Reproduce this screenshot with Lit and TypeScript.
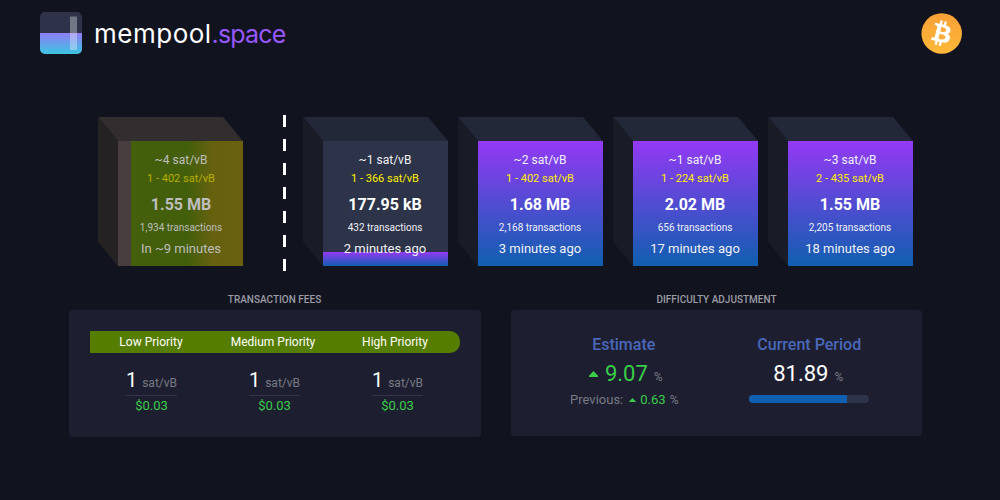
import { LitElement, html, css } from "lit";
import { customElement } from "lit/decorators.js";
import { styleMap } from "lit/directives/style-map.js";

interface Block {
  fee: string;
  range: string;
  size: string;
  count: string;
  time: string;
  fill: number;
}

const BLOCKS: Block[] = [
  { fee: "~1 sat/vB", range: "1 - 366 sat/vB", size: "177.95 kB", count: "432 transactions", time: "2 minutes ago", fill: 11.2 },
  { fee: "~2 sat/vB", range: "1 - 402 sat/vB", size: "1.68 MB", count: "2,168 transactions", time: "3 minutes ago", fill: 100 },
  { fee: "~1 sat/vB", range: "1 - 224 sat/vB", size: "2.02 MB", count: "656 transactions", time: "17 minutes ago", fill: 100 },
  { fee: "~3 sat/vB", range: "2 - 435 sat/vB", size: "1.55 MB", count: "2,205 transactions", time: "18 minutes ago", fill: 100 },
];

const PENDING: Block = { fee: "~4 sat/vB", range: "1 - 402 sat/vB", size: "1.55 MB", count: "1,934 transactions", time: "In ~9 minutes", fill: 0 };

@customElement("app-root")
export class AppRoot extends LitElement {
  static styles = css`
    :host { display: block; width: 1000px; height: 500px; overflow: hidden; background: #11131f; color: #fff; font-family: Roboto, sans-serif; }
    * { box-sizing: border-box; }
    svg { display: block; }
    .header { display: flex; align-items: center; height: 54px; padding: 12px 38px 0 40px; }
    .brand { margin-left: 12px; padding-top: 2px; font: 400 26px/42px Inter, sans-serif; letter-spacing: 0.5px; flex: 1; white-space: nowrap; }
    .brand span { color: #9857ff; font-size: 25px; letter-spacing: -0.85px; }
    .chain { display: flex; padding: 63px 0 0 98px; height: 218px; }
    .cube { display: grid; grid-template: 24px 125px / 20px 125px; margin-right: 10px; flex: none; }
    .shade { grid-area: 1 / 1 / 3 / 3; }
    .face { grid-area: 2 / 2; text-align: center; padding: 10px 1px 0 0; white-space: nowrap; }
    .pending .face { padding: 10px 0 0 1px; }
    .fee { font-size: 12px; line-height: 18px; }
    .range { font-size: 11px; line-height: 18px; margin-top: 1px; color: #fff000; }
    .size { font-size: 16px; line-height: 24px; font-weight: 700; margin-top: 5px; }
    .count { font-size: 10px; line-height: 16px; margin-top: 3px; }
    .time { font-size: 13px; line-height: 20px; margin-top: 3px; }
    .fee, .count, .time { color: #f0f0f6; }
    .pending .fee, .pending .size, .pending .count, .pending .time { color: #bebebe; }
    .pending .range { color: #b8ae00; }
    .divider { width: 3px; height: 156px; margin: -2px 17px 0 30px; flex: none; background: repeating-linear-gradient(#fff 0 12px, transparent 12px 24px); }
    .panels { display: flex; gap: 30px; padding: 20px 0 0 69px; }
    .panel { width: 412px; }
    .panel.narrow { width: 411px; }
    .title { height: 18px; padding-right: 1px; text-align: center; font-size: 10px; line-height: 15px; font-weight: 500; color: #9b9ca4; }
    .narrow .title { padding-right: 0; }
    .card { height: 127px; background: #1d1f31; border-radius: 4px; padding: 21px; }
    .narrow .card { height: 126px; display: grid; grid-template-columns: 1fr 1fr; padding: 24px 20px 20px; text-align: center; white-space: nowrap; }
    .bar { display: grid; grid-template-columns: 122px 122px 122px; height: 22px; background: #557d00; border-radius: 0 10px 10px 0; text-align: center; font-size: 12px; line-height: 22px; }
    .fees { display: grid; grid-template-columns: 123px 123px 123px; justify-items: center; padding-top: 14px; }
    .rate { height: 29px; border-bottom: 1px solid #353748; font-size: 20px; line-height: 27px; white-space: nowrap; }
    .rate span { font-size: 12px; color: #777983; }
    .price { text-align: center; font-size: 13px; line-height: 19px; color: #3bcc49; }
    .label { font-size: 16px; line-height: 22px; font-weight: 500; color: #4a68b9; }
    .value { font-size: 22px; line-height: 36px; height: 35px; display: flex; justify-content: center; align-items: baseline; padding-right: 2px; }
    .value.green { padding: 0 0 0 4px; }
    .unit { font-size: 12px; color: #777983; margin-left: 6px; }
    .green { color: #3bcc49; }
    .arrow { width: 9px; height: 6px; margin: 1px 7px 0 0; align-self: center; }
    .previous { display: flex; justify-content: center; align-items: center; padding-left: 1px; font-size: 13px; line-height: 18px; color: #777983; }
    .small { width: 7px; height: 4px; margin: 0 4px 0 6px; }
    .previous .unit { margin-left: 4px; }
    .progress { width: 120px; height: 8px; margin: 4px auto 0; border-radius: 4px; overflow: hidden; background: #2d3348; }
    .done { height: 8px; background: #105fb0; }
  `;

  private cube(b: Block, pending = false) {
    const base = pending ? "#483d3f" : "#2d3348";
    const background = pending
      ? "linear-gradient(90deg, #483d3f 0 13px, #445f0b 13px 70px, #65610f 94px, #6b600e 125px)"
      : `linear-gradient(to top, #105fb0, #9339f4) bottom / 100% ${b.fill}% no-repeat ${base}`;
    return html`<div class="cube ${pending ? "pending" : ""}">
      <svg class="shade" width="145" height="149" viewBox="0 0 145 149">
        <path d="M0 0H125L145 24H20Z" fill=${pending ? "#322d2e" : "#232838"} />
        <path d="M0 0L20 24V149L0 125Z" fill=${pending ? "#242223" : "#191c27"} />
      </svg>
      <div class="face" style=${styleMap({ background })}>
        <div class="fee">${b.fee}</div>
        <div class="range">${b.range}</div>
        <div class="size">${b.size}</div>
        <div class="count">${b.count}</div>
        <div class="time">${b.time}</div>
      </div>
    </div>`;
  }

  render() {
    return html`
      <div class="header">
        <svg width="42" height="42" viewBox="0 0 42 42">
          <defs>
            <linearGradient id="water" x1="0" y1="0" x2="0" y2="1"><stop stop-color="#8f7df4" /><stop offset="1" stop-color="#3cc5e2" /></linearGradient>
            <clipPath id="tile"><rect width="42" height="42" rx="5" /></clipPath>
          </defs>
          <g clip-path="url(#tile)">
            <rect width="42" height="42" fill="#2e3349" />
            <rect y="21" width="42" height="21" fill="url(#water)" />
            <rect x="30" y="4.5" width="7" height="33.5" rx=".7" fill="#fff" fill-opacity=".33" />
          </g>
        </svg>
        <div class="brand">mempool<span>.space</span></div>
        <svg width="41" height="41" viewBox="0 0 64 64">
          <defs><linearGradient id="coin" x1="0" y1="0" x2="0" y2="1"><stop stop-color="#f9a037" /><stop offset="1" stop-color="#fdb938" /></linearGradient></defs>
          <circle cx="32.3" cy="32" r="31.6" fill="url(#coin)" />
          <path fill="#fff" d="m46.103 27.444c0.637-4.258-2.605-6.547-7.038-8.074l1.438-5.768-3.511-0.875-1.4 5.616c-0.923-0.23-1.871-0.447-2.813-0.662l1.41-5.653-3.509-0.875-1.439 5.766c-0.764-0.174-1.514-0.346-2.242-0.527l0.004-0.018-4.842-1.209-0.934 3.75s2.605 0.597 2.55 0.634c1.422 0.355 1.679 1.296 1.636 2.042l-1.638 6.571c0.098 0.025 0.225 0.061 0.365 0.117-0.117-0.029-0.242-0.061-0.371-0.092l-2.296 9.205c-0.174 0.432-0.615 1.08-1.609 0.834 0.035 0.051-2.552-0.637-2.552-0.637l-1.743 4.019 4.569 1.139c0.85 0.213 1.683 0.436 2.503 0.646l-1.453 5.834 3.507 0.875 1.439-5.772c0.958 0.26 1.888 0.5 2.798 0.726l-1.434 5.745 3.511 0.875 1.453-5.823c5.987 1.133 10.489 0.676 12.384-4.739 1.527-4.36-0.076-6.875-3.226-8.515 2.294-0.529 4.022-2.038 4.483-5.155zm-8.022 11.249c-1.085 4.36-8.426 2.003-10.806 1.412l1.928-7.729c2.38 0.594 10.012 1.77 8.878 6.317zm1.086-11.312c-0.99 3.966-7.1 1.951-9.082 1.457l1.748-7.01c1.982 0.494 8.365 1.416 7.334 5.553z" />
        </svg>
      </div>
      <div class="chain">
        ${this.cube(PENDING, true)}
        <div class="divider"></div>
        ${BLOCKS.map((b) => this.cube(b))}
      </div>
      <div class="panels">
        <div class="panel">
          <div class="title">TRANSACTION FEES</div>
          <div class="card">
            <div class="bar"><div>Low Priority</div><div>Medium Priority</div><div>High Priority</div></div>
            <div class="fees">
              ${[0, 1, 2].map(() => html`<div><div class="rate">1 <span>sat/vB</span></div><div class="price">$0.03</div></div>`)}
            </div>
          </div>
        </div>
        <div class="panel narrow">
          <div class="title">DIFFICULTY ADJUSTMENT</div>
          <div class="card">
            <div>
              <div class="label">Estimate</div>
              <div class="value green">
                <svg class="arrow" viewBox="0 0 9 6"><path d="M4.5 0L9 4.8V6H0V4.8Z" fill="#3bcc49" /></svg>9.07<span class="unit">%</span>
              </div>
              <div class="previous">Previous:
                <svg class="arrow small" viewBox="0 0 10 6"><path d="M5 0L10 5.2V6H0V5.2Z" fill="#3bcc49" /></svg><span class="green">0.63</span><span class="unit">%</span>
              </div>
            </div>
            <div>
              <div class="label">Current Period</div>
              <div class="value">81.89<span class="unit">%</span></div>
              <div class="progress"><div class="done" style=${styleMap({ width: "81.6%" })}></div></div>
            </div>
          </div>
        </div>
      </div>
    `;
  }
}
